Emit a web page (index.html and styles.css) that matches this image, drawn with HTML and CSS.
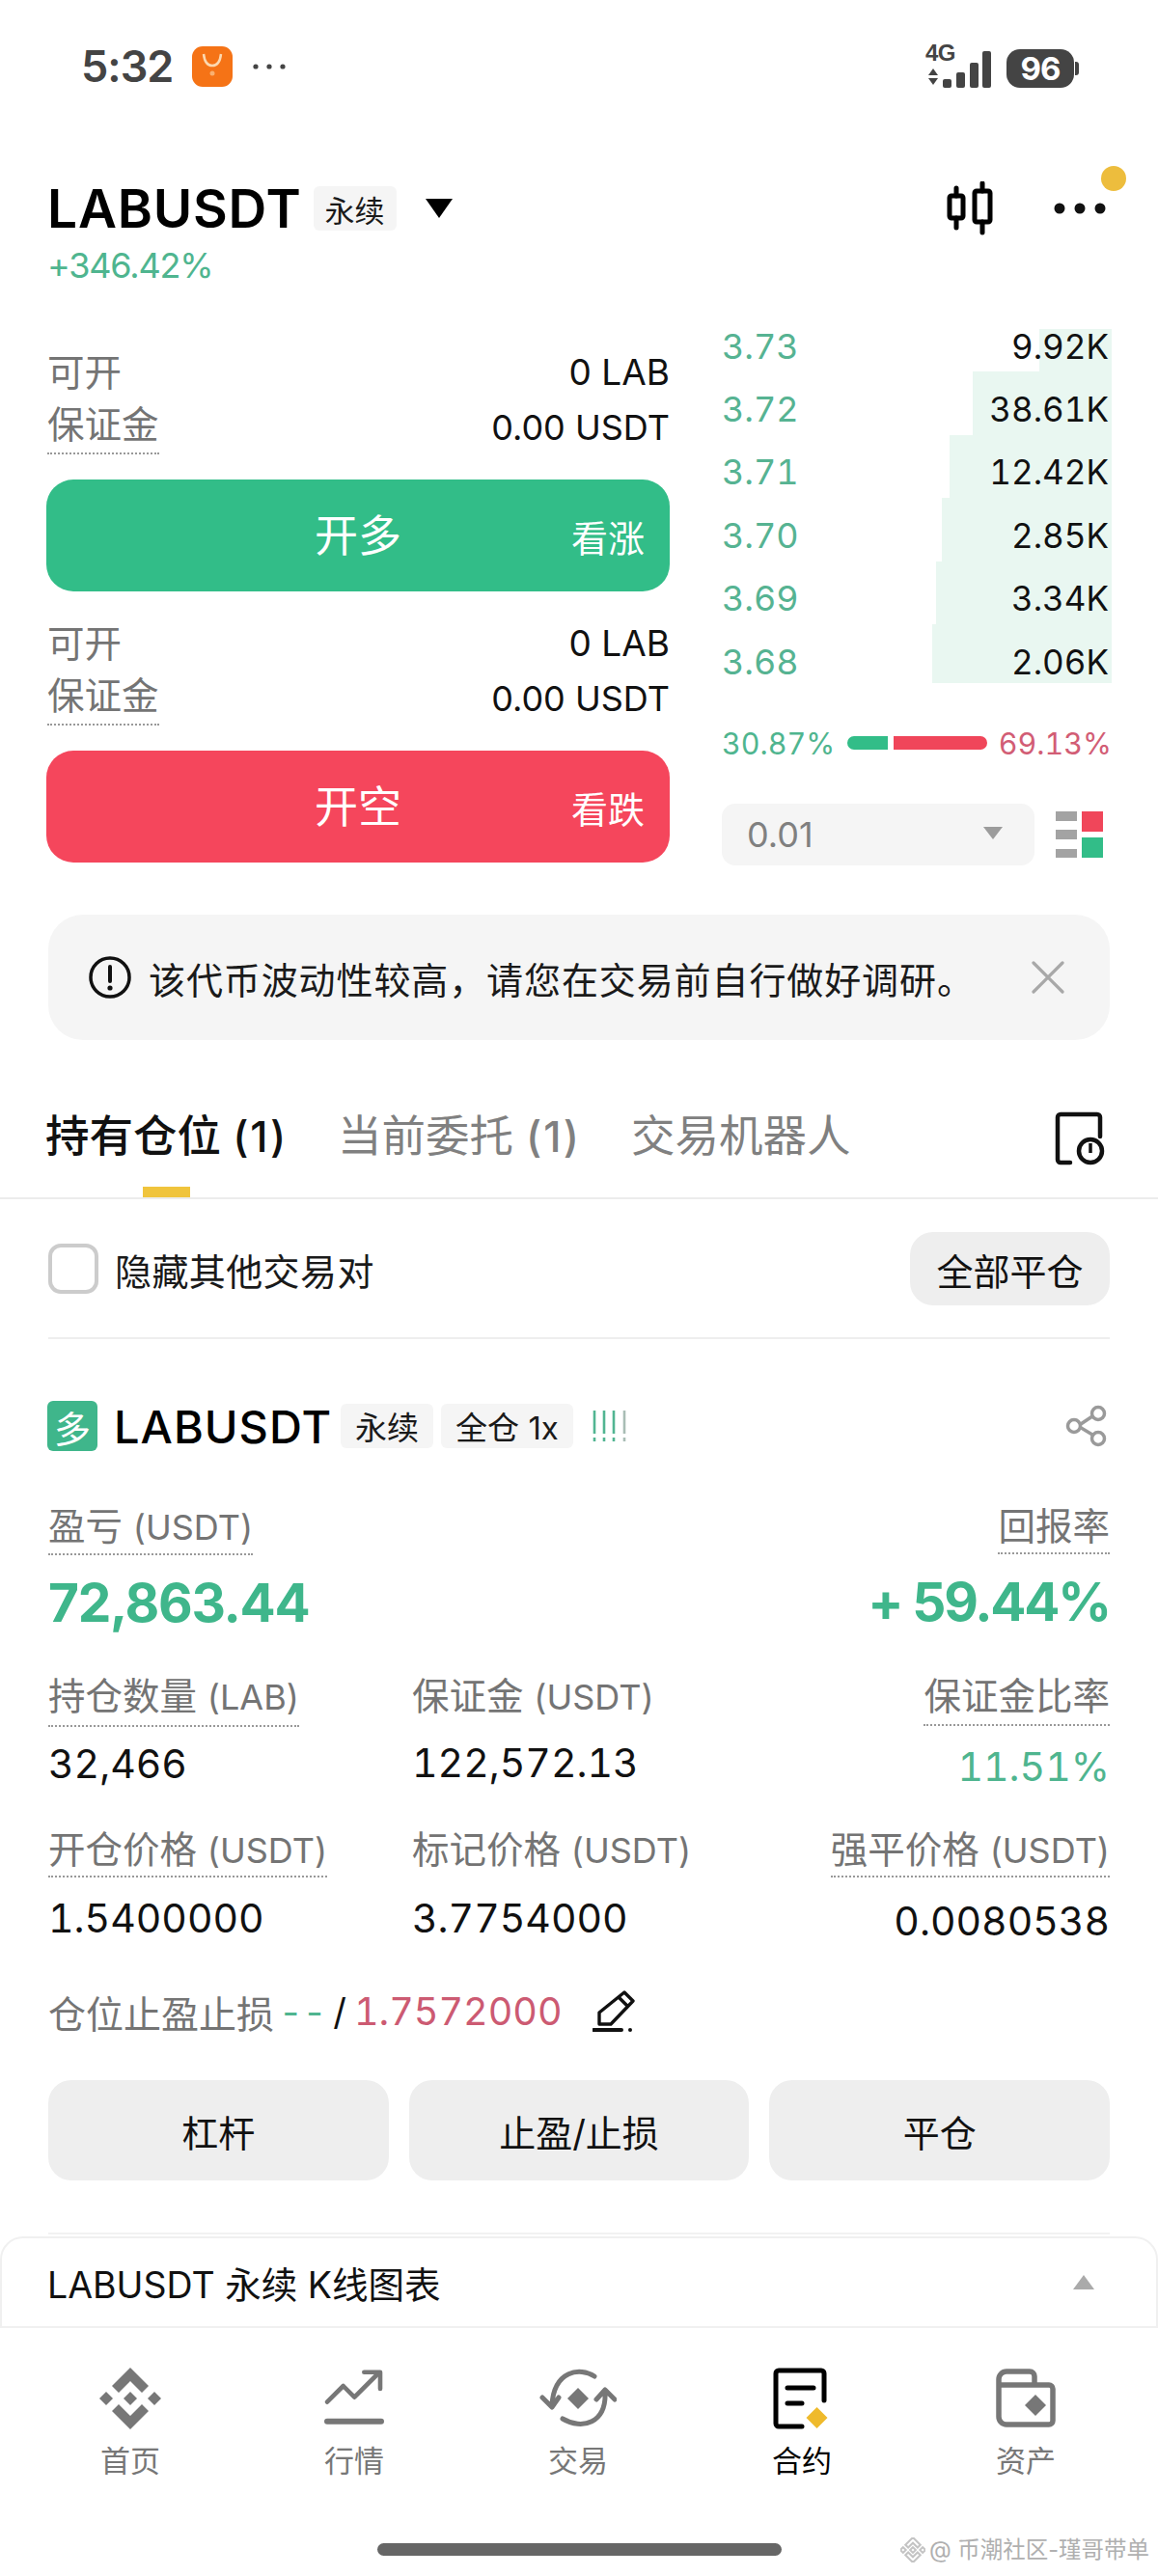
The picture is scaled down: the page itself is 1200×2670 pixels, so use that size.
FILE: index.html
```html
<!DOCTYPE html>
<html lang="zh-CN">
<head>
<meta charset="utf-8">
<title>LABUSDT</title>
<link rel="stylesheet" href="styles.css">
</head>
<body>
<svg class="defs" width="0" height="0">
  <symbol id="bnb" viewBox="0 0 64 64">
    <path d="M32 0 51 19 44 26 32 14 20 26 13 19Z"/>
    <path d="M32 64 51 45 44 38 32 50 20 38 13 45Z"/>
    <path d="M32 25 39 32 32 39 25 32Z"/>
    <path d="M7 25 14 32 7 39 0 32Z"/>
    <path d="M57 25 64 32 57 39 50 32Z"/>
  </symbol>
</svg>
<div class="app">
  <div class="status">
    <div class="status-left">
      <span class="time">5:32</span>
      <svg class="app-icon" viewBox="0 0 42 42"><rect width="42" height="42" rx="11" fill="#f57316"/><path d="M12 8C13 17 17 20 21 20S29 17 30 8" fill="none" stroke="#fcd9b0" stroke-width="2.5"/><circle cx="21" cy="28" r="2.5" fill="#f9b070"/></svg>
      <svg class="more-dots" viewBox="0 0 34 6"><circle cx="3" cy="3" r="2.6"/><circle cx="17" cy="3" r="2.6"/><circle cx="31" cy="3" r="2.6"/></svg>
    </div>
    <div class="status-right">
      <div class="net">
        <span class="net-label">4G</span>
        <svg class="net-arrows" viewBox="0 0 12 17"><path d="M6 0 11 7H1Z"/><path d="M6 17 11 10H1Z"/></svg>
      </div>
      <svg class="signal" viewBox="0 0 50 38"><rect x="0" y="29" width="9" height="9" rx="2"/><rect x="14" y="22" width="9" height="16" rx="2"/><rect x="28" y="12" width="9" height="26" rx="2"/><rect x="41" y="0" width="9" height="38" rx="2"/></svg>
      <div class="battery"><span>96</span></div>
      <span class="battery-nub"></span>
    </div>
  </div>

  <header class="head">
    <div class="title-row">
      <h1 class="title">LABUSDT</h1>
      <span class="tag tag-lg">永续</span>
      <svg class="caret" viewBox="0 0 28 20"><path d="M0 0H28L14 20Z"/></svg>
      <div class="head-actions">
        <svg class="candle" viewBox="0 0 50 56"><path d="M11 7V15M11 38V48M38 2V10M38 42V53" fill="none" stroke="#000" stroke-width="5" stroke-linecap="round"/><rect x="4" y="15" width="14" height="23" rx="2" fill="none" stroke="#000" stroke-width="5"/><rect x="30" y="10" width="16" height="32" rx="2" fill="none" stroke="#000" stroke-width="5"/></svg>
        <svg class="menu-dots" viewBox="0 0 54 12"><circle cx="6" cy="6" r="5.5"/><circle cx="27" cy="6" r="5.5"/><circle cx="48" cy="6" r="5.5"/></svg>
        <span class="notify"></span>
      </div>
    </div>
    <div class="change">+346.42%</div>
  </header>

  <section class="trade">
    <div class="orders">
      <div class="avail">
        <div class="avail-row"><span class="muted">可开</span><span>0 LAB</span></div>
        <div class="avail-row"><span class="muted dotted">保证金</span><span class="avail-val">0.00 USDT</span></div>
      </div>
      <div class="order-btn long"><span class="order-main">开多</span><span class="order-side">看涨</span></div>
      <div class="avail second">
        <div class="avail-row"><span class="muted">可开</span><span>0 LAB</span></div>
        <div class="avail-row"><span class="muted dotted">保证金</span><span class="avail-val">0.00 USDT</span></div>
      </div>
      <div class="order-btn short"><span class="order-main">开空</span><span class="order-side">看跌</span></div>
    </div>
    <div class="book">
      <div class="book-rows">
        <div class="book-row first"><i class="depth" style="width:75px"></i><span class="price">3.73</span><span class="qty">9.92K</span></div>
        <div class="book-row"><i class="depth" style="width:144px"></i><span class="price">3.72</span><span class="qty">38.61K</span></div>
        <div class="book-row"><i class="depth" style="width:168px"></i><span class="price">3.71</span><span class="qty">12.42K</span></div>
        <div class="book-row"><i class="depth" style="width:176px"></i><span class="price">3.70</span><span class="qty">2.85K</span></div>
        <div class="book-row"><i class="depth" style="width:182px"></i><span class="price">3.69</span><span class="qty">3.34K</span></div>
        <div class="book-row last"><i class="depth" style="width:186px"></i><span class="price">3.68</span><span class="qty">2.06K</span></div>
      </div>
      <div class="ratio">
        <span class="up">30.87%</span>
        <span class="ratio-bar"><i class="bar-up"></i><i class="bar-down"></i></span>
        <span class="down">69.13%</span>
      </div>
      <div class="book-tools">
        <div class="select"><span>0.01</span><svg class="select-caret" viewBox="0 0 20 13"><path d="M0 0H20L10 13Z"/></svg></div>
        <svg class="layout" viewBox="0 0 50 48"><rect x="0" y="0" width="22" height="10" fill="#a3a3a3"/><rect x="0" y="19" width="22" height="10" fill="#a3a3a3"/><rect x="0" y="39" width="22" height="9" fill="#a3a3a3"/><rect x="27" y="0" width="22" height="21" fill="#f0465a"/><rect x="27" y="27" width="22" height="21" fill="#32bd88"/></svg>
      </div>
    </div>
  </section>

  <div class="banner">
    <svg class="info" viewBox="0 0 44 44"><circle cx="22" cy="22" r="20" fill="none" stroke="#111" stroke-width="3.5"/><path d="M22 11V26" stroke="#111" stroke-width="4" stroke-linecap="round"/><circle cx="22" cy="33" r="2.6" fill="#111"/></svg>
    <span class="banner-text">该代币波动性较高，请您在交易前自行做好调研。</span>
    <svg class="close" viewBox="0 0 34 34"><path d="M2 2 32 32M32 2 2 32" stroke="#a8a8a8" stroke-width="3.2" stroke-linecap="round"/></svg>
  </div>

  <nav class="tabs">
    <span class="tab active">持有仓位 <b>(1)</b></span>
    <span class="tab">当前委托 <b>(1)</b></span>
    <span class="tab">交易机器人</span>
    <svg class="history" viewBox="0 0 52 56"><path d="M16 53H6a3 3 0 0 1-3-3V6a3 3 0 0 1 3-3H44a3 3 0 0 1 3 3V26" fill="none" stroke="#111" stroke-width="4.5" stroke-linecap="round"/><circle cx="37" cy="41" r="12" fill="#fff" stroke="#111" stroke-width="4.5"/><path d="M37 33V43" stroke="#111" stroke-width="3.5"/></svg>
  </nav>

  <div class="filter">
    <label class="check"><span class="box"></span><span>隐藏其他交易对</span></label>
    <span class="pill">全部平仓</span>
  </div>

  <section class="position">
    <div class="pos-head">
      <span class="side">多</span>
      <span class="pos-name">LABUSDT</span>
      <span class="tag">永续</span>
      <span class="tag">全仓 1x</span>
      <svg class="risk" viewBox="0 0 36 32"><path d="M2 0V24M2 28V32M12 0V24M12 28V32M22 0V24M22 28V32" stroke="#52b592" stroke-width="2.6"/><path d="M33 0V24M33 28V32" stroke="#a9bdb5" stroke-width="2.6"/></svg>
      <svg class="share" viewBox="0 0 44 44"><path d="M31 10 13 22 33 34" fill="none" stroke="#9a9a9a" stroke-width="3.5"/><circle cx="34" cy="9" r="6.5" fill="#fff" stroke="#9a9a9a" stroke-width="3.5"/><circle cx="9" cy="22" r="6.5" fill="#fff" stroke="#9a9a9a" stroke-width="3.5"/><circle cx="34" cy="35" r="6.5" fill="#fff" stroke="#9a9a9a" stroke-width="3.5"/></svg>
    </div>

    <div class="pnl">
      <div class="cell">
        <span class="muted dotted lab-a">盈亏 <span class="unit">(USDT)</span></span>
        <div class="big">72,863.44</div>
      </div>
      <div class="cell right">
        <span class="muted dotted lab-a">回报率</span>
        <div class="big roe">+ 59.44%</div>
      </div>
    </div>

    <div class="metrics m-b">
      <div class="cell"><span class="muted dotted lab-b">持仓数量 <span class="unit">(LAB)</span></span><div class="val nudge">32,466</div></div>
      <div class="cell"><span class="muted plain lab-b">保证金 <span class="unit">(USDT)</span></span><div class="val lift">122,572.13</div></div>
      <div class="cell right"><span class="muted dotted lab-b">保证金比率</span><div class="val up">11.51%</div></div>
    </div>

    <div class="metrics m-c">
      <div class="cell"><span class="muted dotted lab-c">开仓价格 <span class="unit">(USDT)</span></span><div class="val">1.5400000</div></div>
      <div class="cell"><span class="muted plain lab-c">标记价格 <span class="unit">(USDT)</span></span><div class="val mark">3.7754000</div></div>
      <div class="cell right"><span class="muted dotted lab-c">强平价格 <span class="unit">(USDT)</span></span><div class="val drop">0.0080538</div></div>
    </div>

    <div class="tpsl">
      <span class="muted">仓位止盈止损</span>
      <span class="up tp">--</span>
      <span class="slash">/</span>
      <span class="sl">1.7572000</span>
      <svg class="pencil" viewBox="0 0 44 44"><path d="M7 24 33 3 42 12 19 36H7Z M27 8 37 18" fill="none" stroke="#111" stroke-width="3.4" stroke-linejoin="round"/><path d="M1 42H30" stroke="#111" stroke-width="4" stroke-linecap="round"/><circle cx="39" cy="42" r="2" fill="#111"/></svg>
    </div>

    <div class="actions">
      <span class="action">杠杆</span>
      <span class="action">止盈/止损</span>
      <span class="action">平仓</span>
    </div>
  </section>

  <div class="hairline"></div>

  <div class="kline">
    <span>LABUSDT 永续 K线图表</span>
    <svg class="kline-caret" viewBox="0 0 22 15"><path d="M11 0 22 15H0Z"/></svg>
  </div>

  <nav class="tabbar">
    <div class="tb-item">
      <svg class="tb-icon tb-fill" viewBox="0 0 64 64"><use href="#bnb"/></svg>
      <span>首页</span>
    </div>
    <div class="tb-item">
      <svg class="tb-icon" viewBox="0 0 64 64"><path d="M4 35.7 20.7 19 32.3 30.7 57 6" fill="none" stroke="#777" stroke-width="4.6" stroke-linecap="round" stroke-linejoin="round"/><path d="M42.3 4.7H59V22" fill="none" stroke="#777" stroke-width="4.6" stroke-linecap="round" stroke-linejoin="round"/><path d="M4 55.7H60" stroke="#777" stroke-width="6" stroke-linecap="round"/></svg>
      <span>行情</span>
    </div>
    <div class="tb-item">
      <svg class="tb-icon tb-wide" viewBox="0 0 80 64"><path d="M57 9C42 -1 15 3 13 39M3 31 13 41 20 31" fill="none" stroke="#777" stroke-width="5" stroke-linecap="round" stroke-linejoin="round"/><path d="M24 53C44 65 70 58 68 24M59 33 68 23 78 33" fill="none" stroke="#777" stroke-width="5" stroke-linecap="round" stroke-linejoin="round"/><path d="M40 21 51 32 40 43 29 32Z" fill="#777"/></svg>
      <span>交易</span>
    </div>
    <div class="tb-item active">
      <svg class="tb-icon" viewBox="0 0 64 64"><path d="M32 61H8a3 3 0 0 1-3-3V6a3 3 0 0 1 3-3H52a3 3 0 0 1 3 3V34" fill="none" stroke="#000" stroke-width="5" stroke-linecap="round"/><path d="M17 21H44M17 37H32" stroke="#000" stroke-width="5" stroke-linecap="round"/><path d="M47.500 41 58.500 52 47.500 63 36.500 52Z" fill="#efba2c"/></svg>
      <span>合约</span>
    </div>
    <div class="tb-item">
      <svg class="tb-icon" viewBox="0 0 64 64"><path d="M4 18V12a8 8 0 0 1 8-8H36a5 5 0 0 1 5 5V18H56a4 4 0 0 1 4 4V55a4 4 0 0 1-4 4H12a8 8 0 0 1-8-8ZM4 18H41" fill="none" stroke="#777" stroke-width="5.500" stroke-linejoin="round"/><path d="M42 28 53 39 42 50 31 39Z" fill="#777"/></svg>
      <span>资产</span>
    </div>
  </nav>

  <div class="home-bar"></div>
  <div class="watermark">
    <svg class="wm-logo" viewBox="0 0 64 64"><use href="#bnb"/></svg>
    <span>@ 币潮社区-瑾哥带单</span>
  </div>
</div>
</body>
</html>
```

FILE: styles.css
```css
* { box-sizing: border-box; }
html, body { margin: 0; padding: 0; background: #fff; }
body {
  width: 1200px;
  height: 2670px;
  overflow: hidden;
  font-family: Inter, "Noto Sans CJK SC", sans-serif;
  color: #111;
}
.defs { position: absolute; }
.app { position: relative; width: 1200px; height: 2670px; overflow: hidden; }

/* status bar */
.status {
  height: 130px;
  padding: 45px 82px 0 84px;
  display: flex;
  justify-content: space-between;
  align-items: flex-start;
}
.status-left { display: flex; align-items: center; height: 48px; }
.time { font-size: 45px; font-weight: 600; color: #444; width: 115px; line-height: 48px; letter-spacing: -1px; }
.app-icon { width: 42px; height: 42px; }
.more-dots { width: 34px; height: 6px; margin-left: 21px; fill: #444; }
.status-right { display: flex; align-items: center; height: 46px; }
.net { width: 32px; height: 46px; display: flex; flex-direction: column; }
.net-label { font: 700 24px/20px "Liberation Sans", sans-serif; color: #444; letter-spacing: -0.5px; }
.net-arrows { width: 12px; height: 17px; margin: 6px 0 0 2px; fill: #444; }
.signal { width: 50px; height: 38px; margin: 8px 0 0 -14px; fill: #444; }
.battery {
  width: 70px; height: 40px; margin: 5px 0 0 16px;
  background: #444; border-radius: 14px; color: #fff;
  display: flex; align-items: center; justify-content: center;
  font-size: 33px; font-weight: 700; letter-spacing: -1px;
}
.battery-nub { width: 4px; height: 14px; margin: 5px 0 0 1px; background: #444; border-radius: 0 3px 3px 0; }

/* header */
.head { height: 190px; padding: 62px 48px 0 49px; }
.title-row { display: flex; align-items: center; height: 48px; position: relative; }
.title { margin: 0; font-size: 55px; font-weight: 600; line-height: 48px; color: #000; letter-spacing: 0.8px; }
.tag {
  height: 46px; padding: 0 15px;
  display: inline-flex; align-items: center;
  background: #f5f5f5; border-radius: 6px;
  font-size: 33px; color: #1a1a1a;
}
.tag-lg { margin-left: 12px; width: 86px; justify-content: center; padding: 0; font-size: 31px; }
.caret { width: 28px; height: 20px; margin-left: 30px; fill: #000; }
.head-actions { margin-left: auto; display: flex; align-items: center; position: relative; }
.candle { width: 50px; height: 56px; }
.menu-dots { width: 54px; height: 12px; margin-left: 62px; margin-right: 6px; fill: #111; }
.notify {
  position: absolute; right: -15px; top: -16px;
  width: 26px; height: 26px; border-radius: 50%; background: #edbd3d;
}
.change { margin-top: 13px; font-size: 36px; line-height: 44px; color: #4fb58f; letter-spacing: -1.2px; }

/* trade */
.trade { display: flex; padding: 0 48px; gap: 54px; align-items: flex-start; }
.orders { width: 646px; padding-top: 43px; }
.avail-row {
  display: flex; justify-content: space-between; align-items: flex-start;
  font-size: 37px; line-height: 46px; color: #111;
}
.avail-row + .avail-row { margin-top: 8px; }
.avail-val { font-size: 36px; margin-top: 3px; }
.muted { color: #747474; font-size: 38.5px; }
.unit { font-size: 36px; }
.dotted { display: inline-block; border-bottom: 2px dotted #999; }
.avail .muted { margin-left: 1px; }
.avail .dotted { padding-bottom: 6px; }
.second { margin-top: 31px; }
.order-btn {
  margin-top: 26px; height: 116px; border-radius: 28px; color: #fff;
  position: relative; display: flex; align-items: center; justify-content: center;
}
.long { background: #32bd88; }
.short { background: #f5465c; }
.order-main { font-size: 45px; padding-bottom: 5px; }
.order-side { position: absolute; right: 26px; top: 50%; transform: translateY(-50%); font-size: 38px; }

/* book */
.book { width: 404px; }
.book-rows { height: 392.4px; }
.book-row {
  position: relative; height: 65.4px; padding-top: 12px;
  display: flex; justify-content: space-between; align-items: center;
  font-size: 36px;
  font-variant-numeric: tabular-nums;
}
.depth { position: absolute; right: 0; top: 0; bottom: 0; background: #e9f7f1; }
.first .depth { top: 21px; }
.last .depth { bottom: 4px; }
.price { position: relative; color: #56b392; }
.qty { position: relative; margin-right: 3px; color: #111; font-size: 35px; }
.ratio {
  margin-top: 38px; height: 40px;
  display: flex; align-items: center; justify-content: space-between;
  font-size: 30.5px;
  font-variant-numeric: tabular-nums;
}
.up { color: #4fb58f; }
.down { color: #d25d75; }
.ratio-bar { display: flex; gap: 6px; width: 145px; height: 14px; }
.ratio-bar i { display: block; height: 14px; }
.bar-up { width: 42px; background: #32bd88; border-radius: 7px 0 0 7px; }
.bar-down { width: 97px; background: #f0465a; border-radius: 0 7px 7px 0; }
.book-tools { margin-top: 43px; display: flex; align-items: center; justify-content: space-between; }
.select {
  width: 324px; height: 64px; padding: 0 33px 0 26px;
  background: #f5f5f5; border-radius: 14px;
  display: flex; align-items: center; justify-content: space-between;
  font-size: 36px; color: #808080;
}
.select-caret { width: 20px; height: 13px; fill: #9c9c9c; margin-top: -4px; }
.layout { width: 50px; height: 48px; margin-right: 8px; }

/* banner */
.banner {
  margin: 51px 50px 0; height: 130px; padding: 0 47px 0 42px;
  background: #f5f5f5; border-radius: 36px;
  display: flex; align-items: center;
}
.info { width: 44px; height: 44px; flex: none; }
.banner-text { margin-left: 18px; font-size: 38px; white-space: nowrap; color: #1a1a1a; letter-spacing: 0.9px; }
.close { width: 34px; height: 34px; margin-left: auto; }

/* tabs */
.tabs {
  margin-top: 74px; height: 91px; padding: 0 55px 0 47px;
  display: flex; align-items: flex-start; gap: 52px;
  border-bottom: 2px solid #ececec;
}
.tab { position: relative; font-size: 45.5px; line-height: 52px; color: #808080; white-space: nowrap; }
.tab b { font-size: 44px; font-weight: 500; letter-spacing: 2px; }
.tab.active { color: #111; font-weight: 500; }
.tab.active::after {
  content: ""; position: absolute; left: 101px; top: 78px;
  width: 49px; height: 11px; background: #f0c43c;
}
.history { width: 52px; height: 56px; margin-left: auto; }

/* filter */
.filter {
  margin: 35px 50px 0; height: 110px; padding-bottom: 34px;
  display: flex; align-items: center; justify-content: space-between;
  border-bottom: 2px solid #eeeeee;
}
.check { display: flex; align-items: center; font-size: 38px; color: #1a1a1a; letter-spacing: 0.4px; }
.box { width: 52px; height: 52px; border: 4px solid #cccccc; border-radius: 13px; margin-right: 17px; }
.pill {
  width: 207px; height: 76px; background: #eeeeee; border-radius: 24px;
  display: flex; align-items: center; justify-content: center;
  font-size: 38px; color: #111;
}

/* position */
.position { padding: 64px 50px 0; }
.pos-head { display: flex; align-items: center; height: 52px; }
.side {
  width: 52px; height: 52px; margin-left: -1px; background: #3fb68b; border-radius: 6px; color: #fff;
  display: flex; align-items: center; justify-content: center; font-size: 38px;
}
.pos-name { margin: 0 9px 0 17px; font-size: 47px; font-weight: 500; color: #000; letter-spacing: 1px; }
.pos-head .tag + .tag { margin-left: 8px; }
.risk { width: 36px; height: 32px; margin-left: 20px; }
.share { width: 44px; height: 44px; margin-left: auto; margin-right: 2px; }
.pnl { margin-top: 59px; display: flex; justify-content: space-between; }
.cell { min-width: 0; }
.right { text-align: right; }
.lab-a, .lab-b, .lab-c { line-height: 38px; white-space: nowrap; }
.lab-a { padding-bottom: 8px; }
.lab-b { padding-bottom: 10px; }
.lab-c { padding-bottom: 7px; }
.plain { display: inline-block; }
.big { margin-top: 19px; font-size: 55px; font-weight: 700; line-height: 60px; color: #3fb68b; letter-spacing: -1.3px; }
.roe { letter-spacing: -2.2px; }
.metrics { display: grid; grid-template-columns: 377px 1fr 1fr; }
.m-b { margin-top: 48px; }
.m-c { margin-top: 42px; }
.val { margin-top: 17px; font-size: 41px; line-height: 50px; color: #111; white-space: nowrap; font-variant-numeric: tabular-nums; }
.val.up { color: #4fb58f; }
.val.nudge { margin-top: 13px; }
.val.lift { margin-top: 14px; }
.val.mark { margin-top: 19px; }
.val.drop { margin-top: 20px; }
.tpsl { margin-top: 44px; height: 50px; display: flex; align-items: center; font-size: 38px; font-variant-numeric: tabular-nums; }
.tpsl .muted { font-size: 39px; }
.tp { margin-left: 5px; }
.slash { margin-left: 7px; color: #111; }
.sl { margin-left: 8px; color: #cc5a72; font-size: 39.5px; }
.pencil { width: 44px; height: 44px; margin-left: 31px; margin-top: -3px; }
.actions { margin-top: 46px; display: grid; grid-template-columns: repeat(3, 1fr); gap: 21px; }
.action {
  height: 104px; background: #eeeeee; border-radius: 24px;
  display: flex; align-items: center; justify-content: center;
  font-size: 38px; color: #111;
}

/* bottom */
.hairline { margin: 54px 50px 0; height: 2px; background: #f2f2f2; }
.kline {
  margin-top: 2px; height: 95px; padding: 0 64px 0 47px;
  border: 2px solid #f0f0f0; border-radius: 24px 24px 0 0;
  display: flex; align-items: center; justify-content: space-between;
  font-size: 37.5px; color: #111;
}
.kline-caret { width: 22px; height: 15px; fill: #aaaaaa; }
.tabbar {
  padding: 41px 21px 0 19px;
  display: grid; grid-template-columns: repeat(5, 232px);
}
.tb-item {
  display: flex; flex-direction: column; align-items: center;
  font-size: 31px; line-height: 32px; color: #777;
}
.tb-item span { margin-top: 17px; }
.tb-item.active { color: #000; }
.tb-icon { width: 64px; height: 64px; }
.tb-wide { width: 80px; }
.tb-fill { fill: #777; }
.home-bar { margin: 69px auto 0; width: 419px; height: 13px; border-radius: 7px; background: #666; }
.watermark {
  position: absolute; left: 933px; top: 2628px;
  display: flex; align-items: center; gap: 4px;
  font-size: 23.5px; line-height: 30px; color: #b0b0b0; white-space: nowrap;
}
.wm-logo { width: 26px; height: 30px; fill: none; stroke: #c4c4c4; stroke-width: 5; }
```
